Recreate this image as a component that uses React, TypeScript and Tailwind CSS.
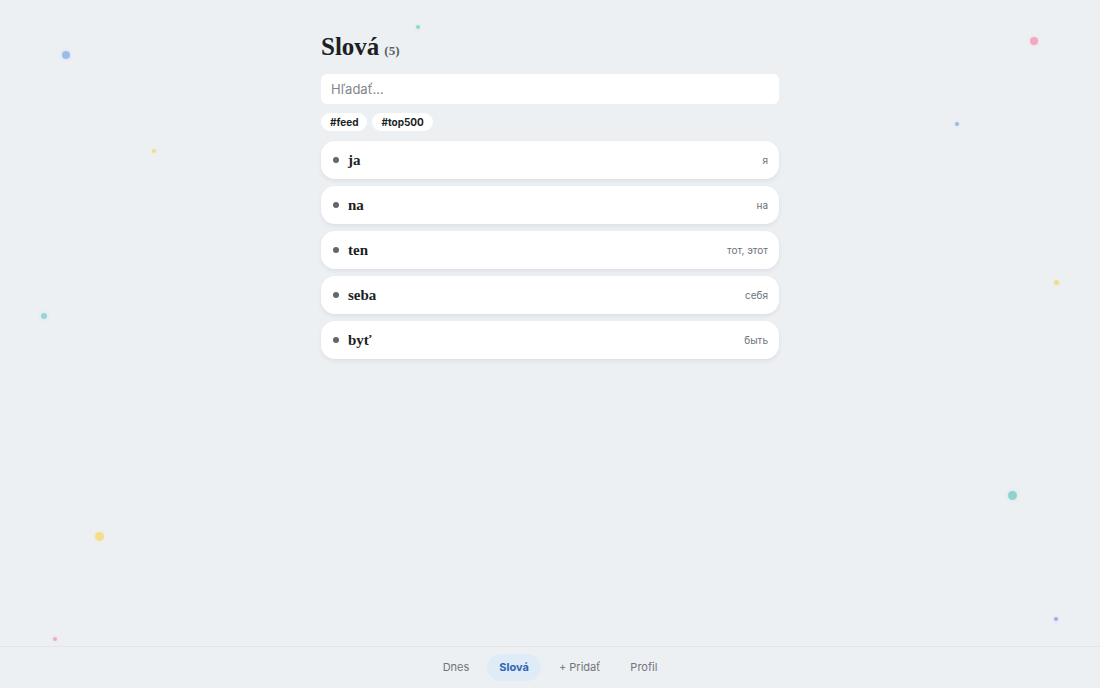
import React from "react";

const words = [
  { word: "ja", tr: "я" },
  { word: "na", tr: "на" },
  { word: "ten", tr: "тот, этот" },
  { word: "seba", tr: "себя" },
  { word: "byť", tr: "быть" },
];

const dots = [
  { x: 66, y: 55, s: 8, c: "#9dbcec" },
  { x: 418, y: 27, s: 4, c: "#8fd6c4" },
  { x: 154, y: 151, s: 4, c: "#f0dc8a" },
  { x: 1034, y: 41, s: 8, c: "#f2a9c0" },
  { x: 957, y: 124, s: 4, c: "#9db8ee" },
  { x: 1056, y: 282, s: 5, c: "#f3dc8c" },
  { x: 44, y: 316, s: 6, c: "#94d6d0" },
  { x: 99, y: 536, s: 9, c: "#f3de8a" },
  { x: 1012, y: 495, s: 9, c: "#8fd3cc" },
  { x: 1056, y: 619, s: 4, c: "#a3a9ec" },
  { x: 55, y: 639, s: 4, c: "#f2a9c0" },
];

const sans = "font-['Inter','Noto_Sans',sans-serif]";
const serif = "font-['Liberation_Serif','DejaVu_Serif',serif]";

const navItems = [
  { label: "Dnes", active: false },
  { label: "Slová", active: true },
  { label: "+ Pridať", active: false },
  { label: "Profil", active: false },
];

export default function App() {
  return (
    <div className={`relative h-[688px] w-full overflow-hidden bg-[#edf0f3] ${sans}`}>
      {dots.map((d, i) => (
        <span
          key={i}
          className="absolute rounded-full"
          style={{
            left: d.x - d.s / 2,
            top: d.y - d.s / 2,
            width: d.s,
            height: d.s,
            background: d.c,
            boxShadow: `0 0 4px ${d.c}55`,
          }}
        />
      ))}

      <main className="mx-auto flex w-[458px] flex-col pt-[32px]">
        <h1 className={`flex items-baseline gap-[5px] text-[#1c1f24] ${serif}`}>
          <span className="text-[25px] font-bold leading-[30px]">Slová</span>
          <span className="text-[13px] font-bold text-[#5b6068]">(5)</span>
        </h1>

        <input
          placeholder="Hľadať..."
          className="mt-[12px] h-[30px] w-full rounded-[6px] bg-white px-[10px] text-[13px] text-[#333] outline-none placeholder:text-[#80858c]"
        />

        <div className="mt-[9px] flex gap-[5px]">
          <span className="rounded-full bg-white px-[9px] py-[3px] text-[10px] font-bold leading-[12px] text-[#1c1f24]">#feed</span>
          <span className="rounded-full bg-white px-[9px] py-[3px] text-[10px] font-bold leading-[12px] text-[#1c1f24]">#top500</span>
        </div>

        <ul className="mt-[10px] flex flex-col gap-[7px]">
          {words.map((w) => (
            <li
              key={w.word}
              className="flex h-[38px] items-center rounded-[14px] bg-white pl-[12px] pr-[11px] shadow-[0_2px_4px_rgba(20,30,50,0.08)]"
            >
              <span className="h-[6px] w-[6px] rounded-full bg-[#63676d]" />
              <span className={`ml-[9px] text-[15px] font-bold text-[#1c1f24] ${serif}`}>{w.word}</span>
              <span className="ml-auto text-[10px] text-[#6d727a]">{w.tr}</span>
            </li>
          ))}
        </ul>
      </main>

      <nav className="absolute bottom-0 left-0 right-0 flex h-[42px] items-center justify-center gap-[6px] border-t border-[#e2e6ea] bg-[#edf0f3] text-[11px]">
        {navItems.map((n) => (
          <span
            key={n.label}
            className={
              n.active
                ? "rounded-full bg-[#e0ebf8] px-[12px] py-[5px] font-bold text-[#2d67b3]"
                : "rounded-full px-[12px] py-[5px] text-[#70757d]"
            }
          >
            {n.label}
          </span>
        ))}
      </nav>
    </div>
  );
}
